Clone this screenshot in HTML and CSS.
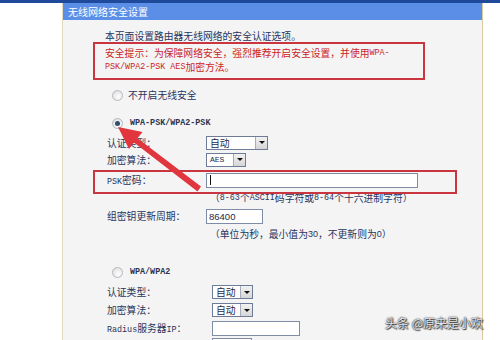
FILE: index.html
```html
<!DOCTYPE html>
<html lang="zh-CN">
<head>
<meta charset="utf-8">
<title>无线网络安全设置</title>
<link rel="stylesheet" href="styles.css">
</head>
<body>
<div class="topbar"></div>
<div class="main">
  <div class="gutter"></div>
  <div class="panel">
    <div class="title">无线网络安全设置</div>
    <p class="intro">本页面设置路由器无线网络的安全认证选项。</p>
    <div class="warn">
      <div class="wl">安全提示：为保障网络安全，强烈推荐开启安全设置，并使用<span class="lat">WPA-</span></div>
      <div class="wl"><span class="lat">PSK/WPA2-PSK AES</span>加密方法。</div>
    </div>

    <div class="opt opt-a"><span class="radio"></span><span class="opt-text">不开启无线安全</span></div>
    <div class="opt opt-b"><span class="radio on"></span><span class="opt-text lat strong">WPA-PSK/WPA2-PSK</span></div>

    <div class="row first"><span class="lbl">认证类型：</span><span class="sel w62"><span class="sel-val">自动</span><span class="sel-btn"><i></i></span></span></div>
    <div class="row"><span class="lbl">加密算法：</span><span class="sel w40"><span class="sel-val lat">AES</span><span class="sel-btn"><i></i></span></span></div>
    <div class="row tall psk"><span class="lbl"><span class="lat">PSK</span>密码：</span><span class="inp w213"><span class="caret"></span></span></div>
    <div class="note tall">（<span class="lat">8-63</span>个<span class="lat">ASCII</span>码字符或<span class="lat">8-64</span>个十六进制字符）</div>
    <div class="row tall"><span class="lbl">组密钥更新周期：</span><span class="inp w58"><span class="inp-val">86400</span></span></div>
    <div class="note tall">（单位为秒，最小值为<span class="num">30</span>，不更新则为<span class="num">0</span>）</div>

    <div class="opt opt-c"><span class="radio"></span><span class="opt-text lat strong">WPA/WPA2</span></div>
    <div class="row tall g2 first2"><span class="lbl">认证类型：</span><span class="sel w42"><span class="sel-val">自动</span><span class="sel-btn"><i></i></span></span></div>
    <div class="row tall g2"><span class="lbl">加密算法：</span><span class="sel w42"><span class="sel-val">自动</span><span class="sel-btn"><i></i></span></span></div>
    <div class="row tall g2"><span class="lbl"><span class="lat">Radius</span>服务器<span class="lat">IP</span>：</span><span class="inp w89"></span></div>
    <div class="row tall g2 top"><span class="lbl"></span><span class="inp w40"></span></div>
  </div>
  <div class="gutter-r"></div>
</div>

<div class="mark-box"></div>
<svg class="arrow" width="500" height="340" viewBox="0 0 500 340" aria-hidden="true">
  <polygon points="118,127 142.5,132 137.5,138.2 201,186.5 197.5,191.5 134,142.6 129,149" fill="#e1363d"/>
</svg>
<div class="watermark">头条 @原来是小欢</div>
</body>
</html>
```

FILE: styles.css
```css
html, body {
  margin: 0;
  padding: 0;
  background: #ffffff;
}
body {
  position: relative;
  width: 500px;
  height: 340px;
  overflow: hidden;
  font-family: "Noto Sans CJK SC", "Noto Sans", sans-serif;
  font-size: 9.8px;
  color: #27345e;
}
.topbar {
  height: 3px;
  background: #1f4a9c;
}
.main {
  display: flex;
  height: 337px;
  overflow: hidden;
}
.gutter {
  width: 62px;
  flex: none;
  background: #ffffff;
}
.gutter-r {
  flex: 1;
  background: #ffffff;
}
.panel {
  width: 419px;
  flex: none;
  background: #f4f4f4;
  border-left: 1px solid #e3d9bd;
  border-right: 1px solid #d9cba0;
}
.title {
  height: 17px;
  line-height: 17px;
  padding-left: 5px;
  background: #5b8fe7;
  color: #ffffff;
  font-size: 10px;
}
.intro {
  margin: 10px 0 0 42px;
  height: 12px;
  line-height: 12px;
}
.warn {
  box-sizing: border-box;
  width: 332px;
  height: 38px;
  margin-left: 30px;
  border: 2px solid #c9363f;
  padding: 2px 0 0 10px;
  color: #cc1f1f;
}
.wl {
  display: flex;
  align-items: center;
  height: 14px;
  white-space: nowrap;
}
.lat {
  font-family: "Liberation Mono", "DejaVu Sans Mono", monospace;
  font-size: 8.4px;
  line-height: 1;
}
.strong {
  font-weight: bold;
  color: #2b3550;
}
.num {
  font-family: "Liberation Sans", Arial, sans-serif;
  font-size: 9px;
  line-height: 1;
}
.opt {
  display: flex;
  align-items: center;
  height: 18px;
  padding-left: 49px;
}
.opt-a { margin-top: 6px; }
.opt-a .opt-text { margin-left: 5px; }
.opt-b { margin-top: 10px; }
.opt-b .opt-text, .opt-c .opt-text { margin-left: 7px; }
.opt-c { margin-top: 20px; }
.radio {
  position: relative;
  box-sizing: border-box;
  width: 11px;
  height: 11px;
  border-radius: 50%;
  border: 1px solid #b4b8be;
  background: radial-gradient(circle at 60% 65%, #ffffff 0%, #e4e4e4 70%, #cfcfcf 100%);
}
.radio.on::after {
  content: "";
  position: absolute;
  left: 2px;
  top: 2px;
  width: 5px;
  height: 5px;
  border-radius: 50%;
  background: #2e4f70;
}
.row {
  display: flex;
  align-items: center;
  height: 17px;
  padding-left: 44px;
}
.row.first { margin-top: 2px; }
.row.psk { margin-top: 3px; }
.row.first2 { margin-top: 2px; }
.row.top { align-items: flex-start; padding-top: 1px; height: 17px; }
.tall { height: 18px; }
.lbl {
  width: 99px;
  flex: none;
  white-space: nowrap;
}
.g2 .lbl { width: 105px; }
.note {
  display: flex;
  align-items: center;
  padding-left: 147px;
  white-space: nowrap;
}
.sel {
  box-sizing: border-box;
  display: flex;
  align-items: stretch;
  height: 14px;
  border: 1px solid #6f7c97;
  background: #ffffff;
}
.w62 { width: 62px; }
.w40 { width: 40px; }
.w42 { width: 41px; }
.sel-val {
  flex: 1;
  padding-left: 3px;
  line-height: 12px;
  color: #1d2a48;
}
.sel-val.lat { font-size: 8px; line-height: 12px; }
.sel-btn {
  box-sizing: border-box;
  width: 12px;
  display: flex;
  align-items: center;
  justify-content: center;
  background: linear-gradient(#f2f2f2, #d6d6d6);
  border-left: 1px solid #a5acba;
}
.sel-btn i {
  display: block;
  width: 0;
  height: 0;
  border-left: 3px solid transparent;
  border-right: 3px solid transparent;
  border-top: 3px solid #111111;
}
.inp {
  box-sizing: border-box;
  display: flex;
  align-items: center;
  height: 15px;
  border: 1px solid #7f8ca6;
  background: #ffffff;
}
.w213 { width: 212px; }
.w58 { width: 57px; }
.w89 { width: 88px; }
.caret {
  display: block;
  width: 1px;
  height: 10px;
  margin-left: 3px;
  background: #111111;
}
.inp-val {
  padding-left: 2px;
  font-family: "Liberation Sans", Arial, sans-serif;
  font-size: 9.5px;
  color: #1d2a48;
}
.mark-box {
  position: absolute;
  left: 93px;
  top: 170px;
  width: 364px;
  height: 24px;
  box-sizing: border-box;
  border: 2px solid #c9363f;
}
.arrow {
  position: absolute;
  left: 0;
  top: 0;
}
.watermark {
  position: absolute;
  left: 385px;
  top: 314px;
  font-size: 12px;
  line-height: 18px;
  color: #e8e8e8;
  text-shadow: 0 0 1px #222, 0 0 2px #444, 1px 1px 1px #333;
  white-space: nowrap;
}
```
